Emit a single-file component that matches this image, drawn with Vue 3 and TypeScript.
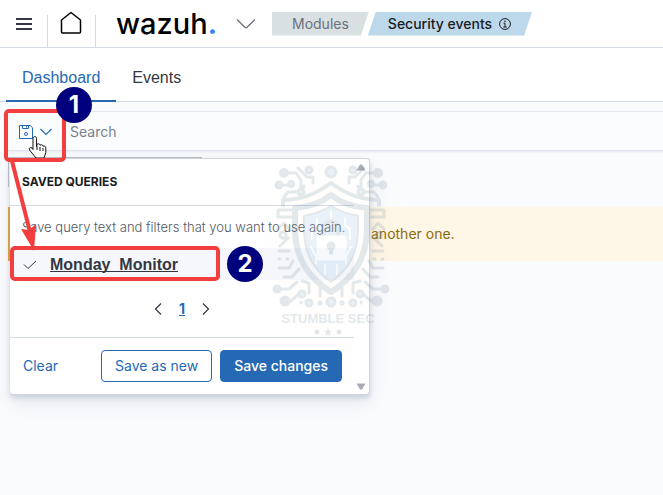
<script setup lang="ts">
import { ref } from 'vue'

const query = ref('')
const tabs: { label: string; active: boolean }[] = [
  { label: 'Dashboard', active: true },
  { label: 'Events', active: false },
]
</script>

<template>
  <div class="page">
    <header class="topbar">
      <button class="icon-btn menu" aria-label="Menu">
        <svg width="16" height="12" viewBox="0 0 16 12"><path d="M0 1h16M0 6h16M0 11h16" stroke="#343741" stroke-width="2" /></svg>
      </button>
      <a class="home" href="#" aria-label="Home">
        <svg width="22" height="24" viewBox="0 0 22 24"><path d="M1.5 9 11 1.5 20.500 9V21a1 1 0 0 1-1 1h-17a1 1 0 0 1-1-1z" fill="none" stroke="#000" stroke-width="1.500" stroke-linejoin="round" /></svg>
      </a>
      <a class="brand" href="#">wazuh<span>.</span></a>
      <button class="icon-btn" aria-label="Switch module">
        <svg width="20" height="12" viewBox="0 0 20 12"><path d="M1 1.500 8.800 9.200a1.500 1.500 0 0 0 2.200 0L19 1.500" fill="none" stroke="#69707d" stroke-width="1.300" /></svg>
      </button>
      <nav class="crumbs" aria-label="Breadcrumb">
        <a class="crumb first" href="#">Modules</a>
        <a class="crumb last" href="#">Security events
          <svg width="12" height="12" viewBox="0 0 12 12"><circle cx="6" cy="6" r="5.400" fill="none" stroke="#1a1c21" /><path d="M4.500 5.200H6V9M4.300 9h3.500" fill="none" stroke="#1a1c21" /><circle cx="6" cy="3.200" r=".8" fill="#1a1c21" /></svg>
        </a>
      </nav>
    </header>

    <nav class="tabs">
      <a v-for="t in tabs" :key="t.label" href="#" class="tab" :class="{ active: t.active }">{{ t.label }}</a>
    </nav>

    <main class="content">
      <div class="search">
        <button class="icon-btn saved" aria-label="Saved queries">
          <svg width="14" height="14" viewBox="0 0 14 14" fill="none" stroke="#2569b5"><path d="M.5.5h10.800l2.200 2.200v10.800H.5zM3.500.5v3h6v-3M7.500 1v1.500" /><circle cx="7" cy="9" r="1.500" /></svg>
          <svg width="12" height="8" viewBox="0 0 12 8" fill="none" stroke="#2569b5" stroke-width="1.200"><path d="m.5 1 5.500 5.500L11.500 1" /></svg>
        </button>
        <input v-model="query" type="text" placeholder="Search" aria-label="Search" />
      </div>
      <p class="callout">another one.</p>
    </main>

    <div class="filter-edge"></div>

    <section class="popover" aria-label="Saved queries">
      <h2>SAVED QUERIES</h2>
      <p class="hint">Save query text and filters that you want to use again.</p>
      <button class="query">
        <svg width="14" height="10" viewBox="0 0 14 10"><path d="m1 4.500 4 4L13 1" fill="none" stroke="#343741" /></svg>
        <span>Monday_Monitor</span>
      </button>
      <div class="pager">
        <button class="icon-btn" aria-label="Previous page"><svg width="8" height="12" viewBox="0 0 8 12"><path d="M7 .5 1.500 6 7 11.500" fill="none" stroke="#343741" stroke-width="1.200" /></svg></button>
        <a href="#">1</a>
        <button class="icon-btn" aria-label="Next page"><svg width="8" height="12" viewBox="0 0 8 12"><path d="M1 .5 6.500 6 1 11.500" fill="none" stroke="#343741" stroke-width="1.200" /></svg></button>
      </div>
      <div class="actions">
        <button class="clear">Clear</button>
        <button class="btn">Save as new</button>
        <button class="btn primary">Save changes</button>
      </div>
      <svg class="arrow up" width="10" height="7" viewBox="0 0 10 7"><path d="M4 .5h2L9.500 6.500h-9z" fill="#a9acb5" /></svg>
      <svg class="arrow down" width="10" height="7" viewBox="0 0 10 7"><path d="M4 6.500h2L9.500.5h-9z" fill="#a9acb5" /></svg>
    </section>

    <div class="mark">
      <svg width="146" height="150" viewBox="255 160 146 150" fill="none" stroke="#6a8496" stroke-width="3" stroke-linecap="round" stroke-linejoin="round">
        <path d="M283 205v-5c20 0 36-8 48-17 12 9 28 17 48 17v5" stroke-width="4" />
        <path d="M331 195c-10 8-22 12-36 13v20c0 31 14 50 36 64 22-14 36-33 36-64v-20c-14-1-26-5-36-13z" stroke-width="6" />
        <path d="M331 206c-8 5-17 8-27 10v12c0 26 10 42 27 54 17-12 27-28 27-54v-12c-10-2-19-5-27-10z" fill="#8fbde0" stroke-width="2" />
        <path d="M317 219v6l-5 4v10M331 212v12M345 219v6l5 4v10M311 247l5 9v8M351 247l-5 9v8M325 265v9M337 265v9" stroke="#fff" stroke-width="2" />
        <g id="side">
          <circle cx="284" cy="173" r="5" fill="#6a8496" stroke="none" />
          <path d="M287 173h9l5 7v9M282 185h6M298 168l9 9h6v6M304 186v1M284 197l4-5h10M294 210h-16v7h14M278 229l6-6 5 6M280 246l8-8M279 251h10M279 259h1M287 259h1M279 268h10l4-7M284 277h8l7-8M279 289h10l8-7M291 301l9-8M301 303l0-1M309 293v-10l-7-2M320 288v8" />
          <circle cx="279" cy="185" r="3" fill="#6a8496" /><circle cx="291" cy="184" r="2.500" fill="#8fbde0" />
          <circle cx="309" cy="170" r="3" fill="#8fbde0" /><circle cx="301" cy="192" r="3" fill="#8fbde0" />
          <circle cx="283" cy="235" r="3" /><circle cx="277" cy="289" r="3" fill="#6a8496" />
          <circle cx="285" cy="301" r="4" fill="#6a8496" /><circle cx="302" cy="294" r="3" fill="#8fbde0" />
          <circle cx="309" cy="303" r="3" fill="#8fbde0" /><circle cx="320" cy="303" r="1" />
        </g>
        <use href="#side" transform="translate(662 0) scale(-1 1)" />
        <circle cx="331" cy="172" r="5" fill="#8fbde0" /><circle cx="331" cy="302" r="4" fill="#8fbde0" />
        <path d="M324 238v-9c0-10 14-10 14 0v9" stroke-width="4" /><rect x="318" y="237" width="27" height="22" rx="2" fill="#fff" stroke="#fff" /><circle cx="331" cy="246" r="3" fill="#6a8496" /><path d="M331 248v5" stroke-width="4" />
      </svg>
      <strong>STUMBLE SEC</strong>
      <svg width="32" height="8" viewBox="0 0 32 8" fill="#6a8496"><circle cx="5" cy="4" r="2.500" /><path d="m16 0 1.200 2.700 2.800.3-2.100 1.900.6 2.900L16 6.300l-2.500 1.500.6-2.900L12 3l2.800-.3z" /><circle cx="27" cy="4" r="2.500" /></svg>
    </div>

    <svg class="annotations" width="270" height="290" viewBox="0 0 270 290">
      <path d="M33 138.500c0-2.500 3.500-2.500 3.500 0v8l.5-2c1-1.500 3-.5 3 .8 1-1 3-.5 3 1 1-.8 2.800 0 2.800 1.500v4.700l-1.800 5.500h-8l-6.500-8c-1-2 1-3 2.500-2l1 1.500z" fill="#fff" stroke="#111" />
      <path d="M37 146v4M40 147v4M43 148v3" stroke="#111" />
      <g fill="none" stroke="#f23e3e" stroke-width="4">
        <rect x="6" y="111" width="58" height="49" rx="3" />
        <rect x="12" y="248" width="206" height="31" rx="3" />
        <path d="m12 161 18 71" />
      </g>
      <path d="m34 251-13-22 8 1 7-6z" fill="#f23e3e" />
      <circle cx="74" cy="105" r="18" fill="#00007f" /><circle cx="245" cy="264" r="18" fill="#00007f" />
    </svg>
    <b class="badge one">1</b>
    <b class="badge two">2</b>
  </div>
</template>

<style>
body {
  margin: 0;
  background: #fafbfd;
}
</style>

<style scoped>
.page {
  position: relative;
  min-height: 100vh;
  overflow: hidden;
  color: #343741;
  font: 14px/20px Inter, sans-serif;
}
* { box-sizing: border-box; }
a { color: inherit; text-decoration: none; }
button { font: inherit; cursor: pointer; }
svg { display: block; flex: none; }
.icon-btn { display: flex; padding: 0; border: 0; background: none; }
.topbar {
  display: flex;
  align-items: center;
  height: 48px;
  background: #fff;
  border-bottom: 1px solid #d3dae6;
}
.menu { width: 47px; padding-left: 16px; }
.home {
  display: flex;
  align-self: flex-end;
  width: 49px;
  height: 32px;
  padding-left: 12px;
  border: solid #d3dae6;
  border-width: 0 1px;
}
.home svg { margin-top: -4px; }
.brand {
  width: 120px;
  margin-left: 20px;
  color: #000;
  font-size: 29px;
  line-height: 40px;
  font-weight: 500;
}
.brand span { color: #3585f9; font-weight: 700; }
.crumbs { display: flex; margin-left: 16px; }
.crumb {
  display: flex;
  align-items: center;
  gap: 8px;
  height: 24px;
  padding: 0 20px;
  background: #d9e0e2;
  color: #69707d;
}
.crumb.first { clip-path: polygon(0 0, 100% 0, calc(100% - 8px) 100%, 0 100%); }
.crumb.last {
  gap: 7px;
  padding-right: 21px;
  background: #bdd8eb;
  color: #1a1c21;
  font-weight: 500;
  margin-left: -1px;
  clip-path: polygon(8px 0, 100% 0, calc(100% - 8px) 100%, 0 100%);
}
.tabs {
  display: flex;
  height: 54px;
  padding: 0 6px;
  background: #fff;
  border-bottom: 1px solid #d3dae6;
}
.tab {
  padding: 20px 16px 0;
  color: #343741;
  font-family: "Liberation Sans", sans-serif;
  font-size: 16px;
}
.tab.active {
  margin-bottom: -1px;
  border-bottom: 2px solid #2569b5;
  color: #2569b5;
}
.content { padding: 9px 0 0 8px; }
.search {
  display: flex;
  height: 40px;
  padding-top: 2px;
  background: #fbfcfd;
  border-top: 1px solid #e3e7ef;
  border-bottom: 1px solid #dfe4ed;
  box-shadow: 0 1px 2px #e4e8f0;
}
.saved { align-items: center; gap: 7px; padding-left: 11px; }
.search input {
  flex: 1;
  min-width: 0;
  margin-left: 10px;
  padding: 0 8px;
  border: 0;
  background: none;
  outline: 0;
  font: inherit;
}
.search input::placeholder { color: #7b808c; opacity: 1; }
.callout {
  height: 54px;
  margin: 56px 0 0;
  padding: 17px 16px 0 361px;
  border-left: 2px solid #dca032;
  background: #fef6e6;
  color: #8a6a0a;
}
.filter-edge {
  position: absolute;
  left: 8px;
  top: 157px;
  width: 194px;
  height: 30px;
  border: solid #b6bdca;
  border-width: 1px 0 0 1px;
}
.popover {
  position: absolute;
  left: 10px;
  top: 158px;
  width: 360px;
  background: #fff;
  border: 1px solid #d0d4dc;
  border-left: 0;
  border-radius: 4px;
  box-shadow: 0 3px 5px #98a2b366, 0 8px 20px #98a2b333;
}
h2 {
  width: 344px;
  height: 47px;
  margin: 0;
  padding: 13px 12px;
  border-bottom: 1px solid #d3dae6;
  color: #1a1c21;
  font-size: 12px;
  line-height: 20px;
  font-weight: 700;
}
.hint {
  margin: 0;
  padding: 11px 12px;
  color: #535966;
  font-size: 13px;
  font-weight: 300;
  white-space: nowrap;
}
.query {
  display: flex;
  align-items: center;
  gap: 13px;
  width: 344px;
  height: 32px;
  padding: 1px 13px 0;
  border: 0;
  background: #f5f7fc;
  color: #343741;
  font-family: "Liberation Sans", sans-serif;
  font-size: 16px;
  font-weight: 700;
}
.query span {
  text-decoration: underline 1px;
  text-decoration-skip-ink: none;
  text-underline-offset: 1px;
}
.pager { display: flex; justify-content: center; align-items: center; gap: 17px; width: 344px; height: 57px; }
.pager a { color: #2569b5; font-weight: 700; text-decoration: underline; }
.actions {
  display: flex;
  gap: 8px;
  width: 344px;
  padding: 12px 12px 12px 0;
  border-top: 1px solid #d3dae6;
}
.actions button { height: 32px; }
.clear { margin-right: auto; padding: 0 13px; border: 0; background: none; color: #2569b5; }
.btn { padding: 0 13px; border: 1px solid #2569b5; border-radius: 4px; background: #fff; color: #2569b5; }
.btn.primary { background: #2569b5; color: #fff; font-weight: 500; }
.arrow { position: absolute; right: 3px; }
.arrow.up { top: 5px; }
.arrow.down { bottom: 4px; }
.mark {
  position: absolute;
  left: 255px;
  top: 160px;
  display: flex;
  flex-direction: column;
  align-items: center;
  width: 146px;
  opacity: .18;
  color: #6a8496;
  background: radial-gradient(#fff0c066, #fff0c000 70%);
  pointer-events: none;
}
.mark strong {
  font-family: "Liberation Sans", sans-serif;
  font-size: 13px;
  line-height: 18px;
  white-space: nowrap;
}
.annotations { position: absolute; left: 0; top: 0; pointer-events: none; }
.badge { position: absolute; width: 36px; color: #fff; font-size: 24px; line-height: 36px; text-align: center; }
.one { left: 56px; top: 87px; }
.two { left: 227px; top: 246px; }
</style>
